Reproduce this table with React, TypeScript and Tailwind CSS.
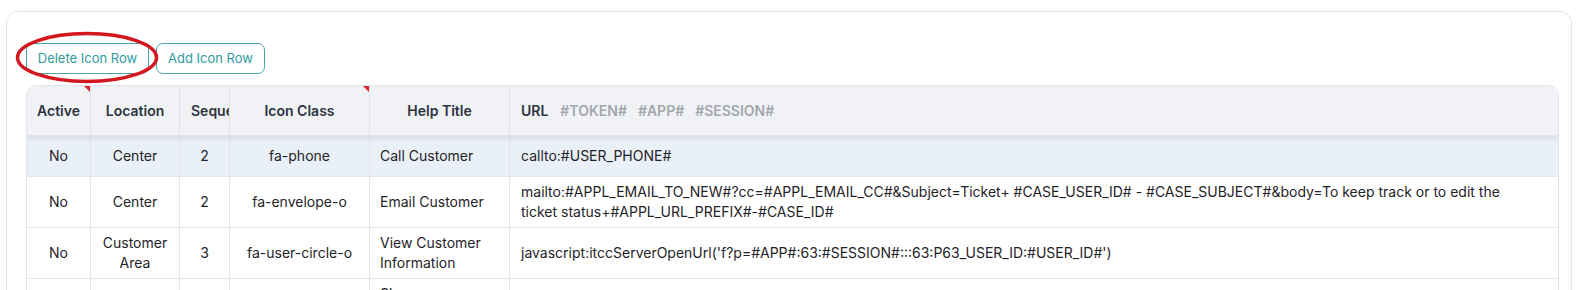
import React from "react";

const cols = "grid grid-cols-[64px_89px_50px_140px_140px_1fr]";

type Row = { active: string; loc: React.ReactNode; seq: string; icon: string; title: React.ReactNode; url: React.ReactNode; hl?: boolean };

const rows: Row[] = [
  { active: "No", loc: "Center", seq: "2", icon: "fa-phone", title: "Call Customer", url: "callto:#USER_PHONE#", hl: true },
  {
    active: "No",
    loc: "Center",
    seq: "2",
    icon: "fa-envelope-o",
    title: "Email Customer",
    url: (
      <>
        mailto:#APPL_EMAIL_TO_NEW#?cc=#APPL_EMAIL_CC#&amp;Subject=Ticket+ #CASE_USER_ID# - #CASE_SUBJECT#&amp;body=To keep track or to edit the
        <br />
        ticket status+#APPL_URL_PREFIX#-#CASE_ID#
      </>
    ),
  },
  {
    active: "No",
    loc: (
      <>
        Customer
        <br />
        Area
      </>
    ),
    seq: "3",
    icon: "fa-user-circle-o",
    title: (
      <>
        View Customer
        <br />
        Information
      </>
    ),
    url: "javascript:itccServerOpenUrl('f?p=#APP#:63:#SESSION#:::63:P63_USER_ID:#USER_ID#')",
  },
  {
    active: "No",
    loc: "Center",
    seq: "4",
    icon: "fa-history",
    title: (
      <>
        Show
        <br />
        Customer
        <br />
        History
      </>
    ),
    url: "javascript:itccServerOpenUrl('f?p=#APP#:70:#SESSION#:::70:P70_USER_ID:#USER_ID#')",
  },
];

function Corner() {
  return (
    <span className="absolute top-0 right-0 w-0 h-0 border-t-[6px] border-t-[#d9262c] border-l-[6px] border-l-transparent" />
  );
}

export default function App() {
  return (
    <div className="bg-white h-[290px] overflow-hidden pt-[11px]" style={{ fontFamily: "Inter, 'Noto Sans', sans-serif" }}>
      <div className="ml-[6px] mr-[4px] border border-[#e4e4e4] rounded-[12px] pt-[31px] pl-[19px] pr-[12px] h-[400px]">
        <div className="relative flex gap-[7px]">
          <button className="h-[31px] w-[123px] border border-[#4aa5ab] rounded-[7px] text-[13px] text-[#2f9aa0]">Delete Icon Row</button>
          <button className="h-[31px] w-[109px] border border-[#4aa5ab] rounded-[7px] text-[13px] text-[#2f9aa0]">Add Icon Row</button>
          <svg className="absolute left-[-11px] top-[-12px] pointer-events-none" width="146" height="54" viewBox="0 0 146 54">
            <ellipse cx="72" cy="26.5" rx="69.5" ry="24" fill="none" stroke="#d3171f" strokeWidth="3.5" />
          </svg>
        </div>
        <div className="mt-[11px] border border-[#e1e4e8] rounded-t-[11px] overflow-hidden text-[14px] text-[#1f2328]">
          <div className={`${cols} relative z-10 h-[50px] bg-[#f0f2f5] shadow-[0_3px_4px_rgba(0,0,0,0.08)] border-b border-[#e0e3e7] font-semibold text-[#2e3440]`}>
            <div className="relative flex items-center justify-center border-r border-[#e0e3e7]">Active<Corner /></div>
            <div className="flex items-center justify-center border-r border-[#e0e3e7]">Location</div>
            <div className="flex items-center px-[11px] overflow-hidden whitespace-nowrap border-r border-[#e0e3e7]">Sequence</div>
            <div className="relative flex items-center justify-center border-r border-[#e0e3e7]">Icon Class<Corner /></div>
            <div className="flex items-center justify-center border-r border-[#e0e3e7]">Help Title</div>
            <div className="flex items-center px-[11px] gap-[12px]">
              <span>URL</span>
              <span className="text-[#a3a7ac] flex gap-[11px]">
                <span>#TOKEN#</span>
                <span>#APP#</span>
                <span>#SESSION#</span>
              </span>
            </div>
          </div>
          {rows.map((r, i) => (
            <div key={i} className={`${cols} min-h-[41px] leading-[20px] border-b border-[#e3e5e8] ${r.hl ? "bg-[#eaf0f7]" : "bg-white"}`}>
              <div className="flex items-center justify-center text-center py-[5px] border-r border-[#e3e5e8]">{r.active}</div>
              <div className="flex items-center justify-center text-center py-[5px] border-r border-[#e3e5e8]">{r.loc}</div>
              <div className="flex items-center justify-center text-center py-[5px] border-r border-[#e3e5e8]">{r.seq}</div>
              <div className="flex items-center justify-center text-center py-[5px] border-r border-[#e3e5e8]">{r.icon}</div>
              <div className="flex items-center px-[10px] py-[5px] border-r border-[#e3e5e8]">
                <div>{r.title}</div>
              </div>
              <div className="flex items-center px-[11px] py-[5px]">
                <div>{r.url}</div>
              </div>
            </div>
          ))}
        </div>
      </div>
    </div>
  );
}
